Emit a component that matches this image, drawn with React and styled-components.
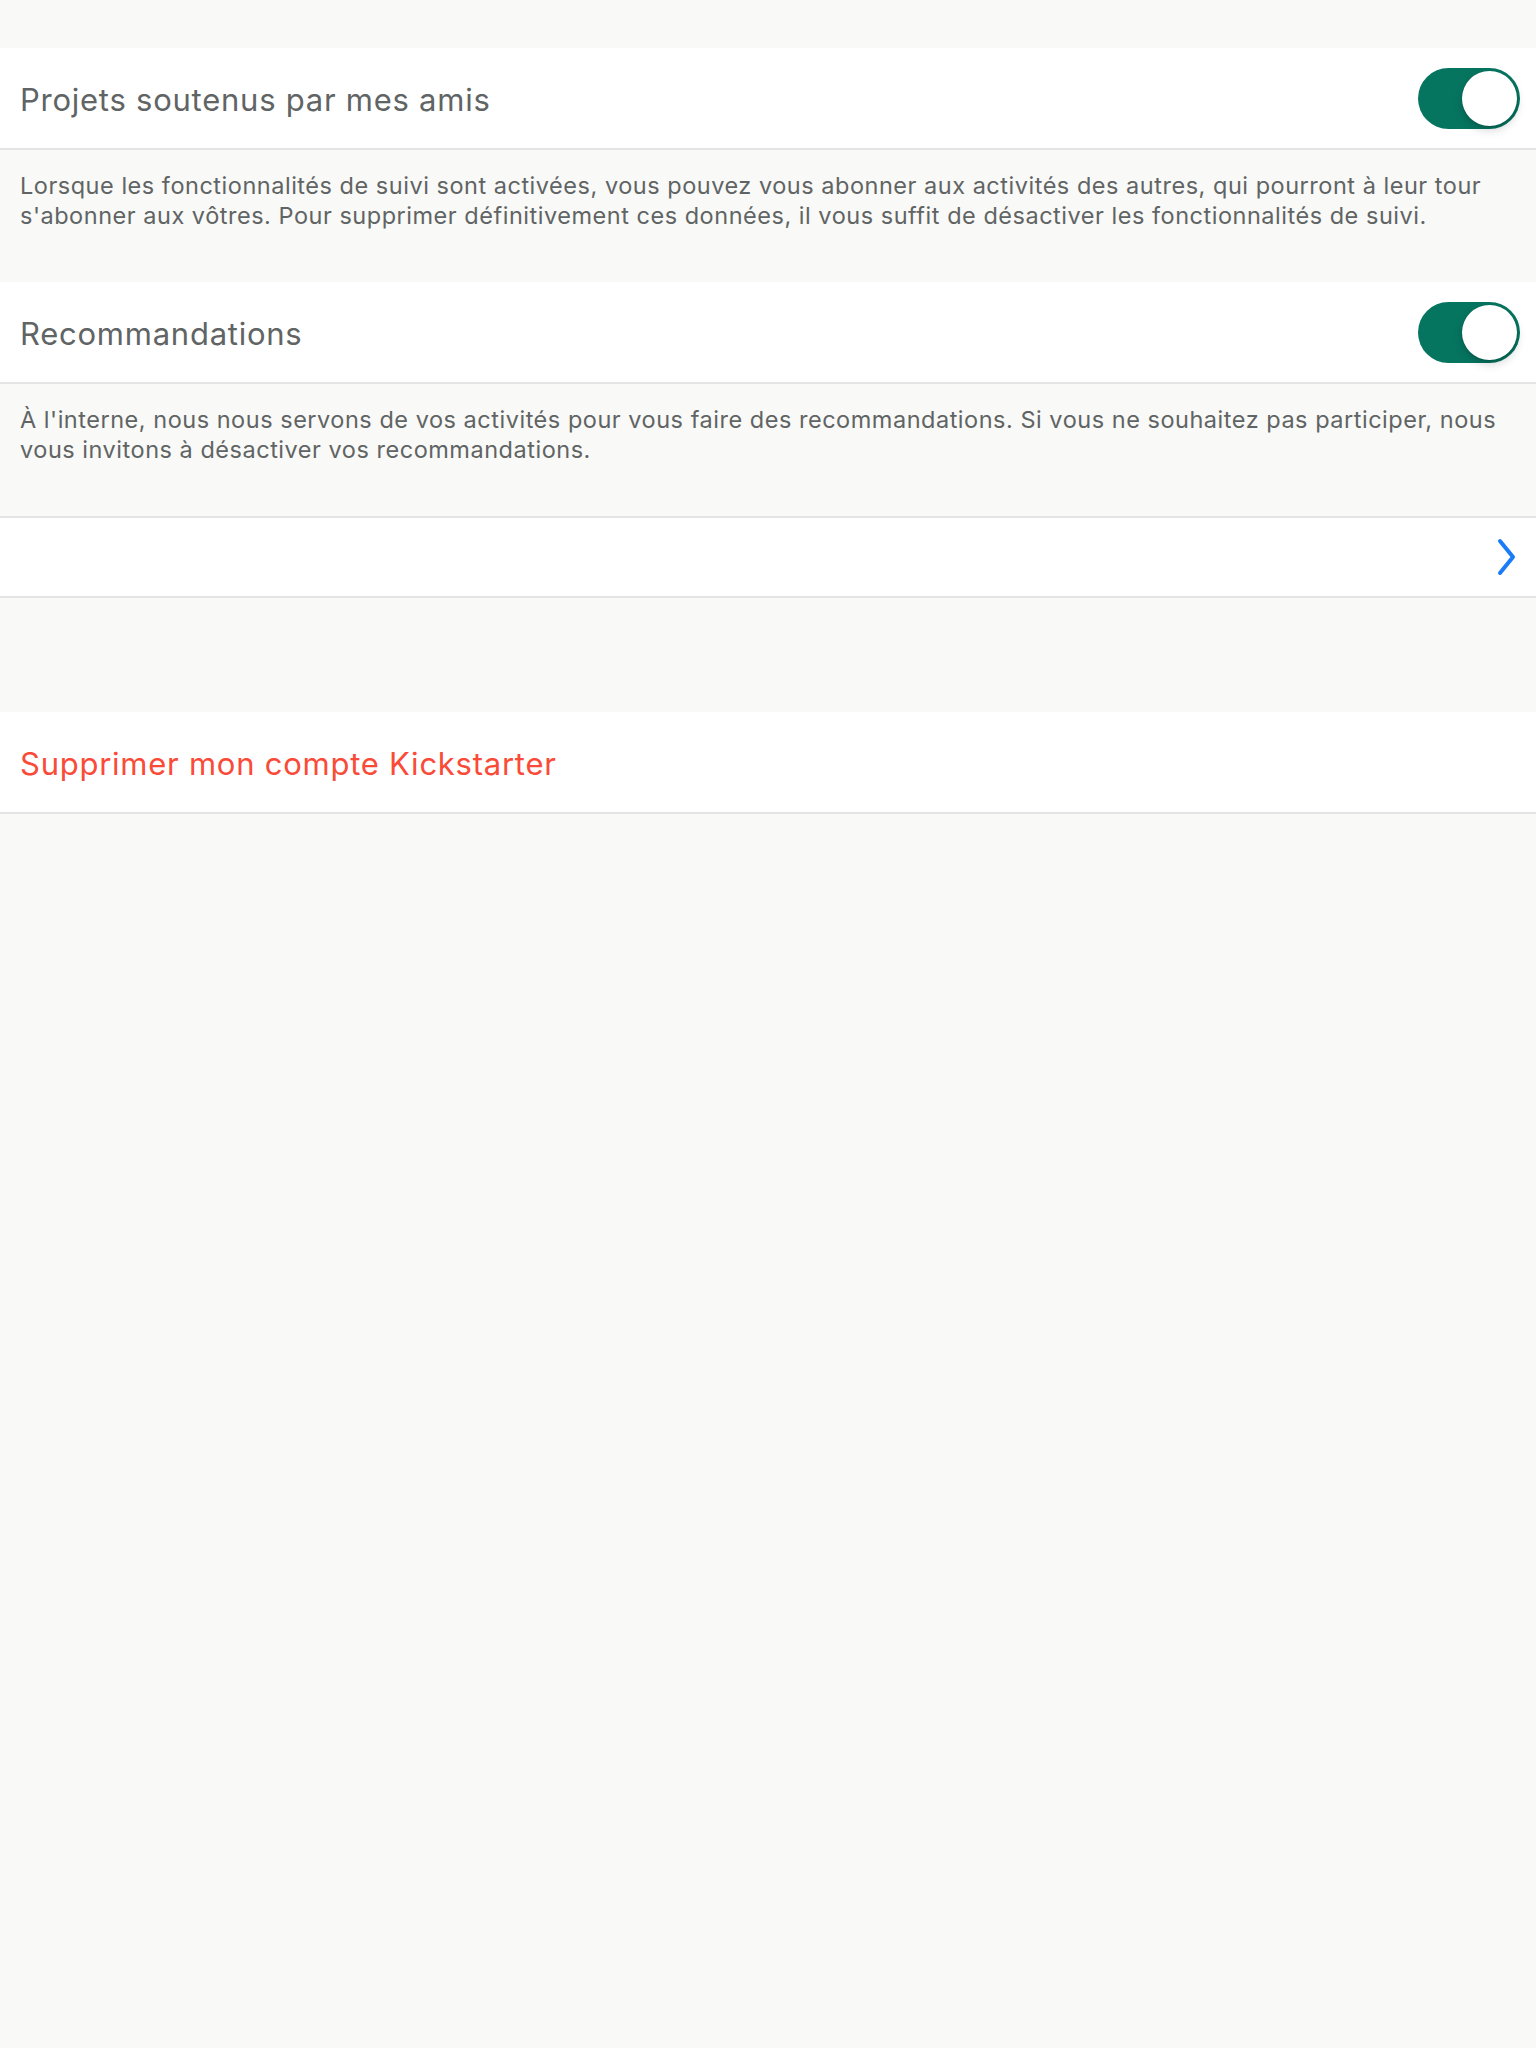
import React from 'react';
import styled, { createGlobalStyle } from 'styled-components';

const colors = {
  page: '#f9f9f7',
  white: '#ffffff',
  text: '#606464',
  line: '#e4e4e4',
  green: '#067560',
  red: '#fa4a38',
  blue: '#1a7cf8',
};

const GlobalStyle = createGlobalStyle`
  html, body {
    margin: 0;
    padding: 0;
    background: ${colors.page};
  }

  body {
    font-family: Inter, "Liberation Sans", Arial, sans-serif;
    color: ${colors.text};
  }
`;

const Page = styled.div`
  min-height: 2048px;
  padding-top: 48px;
  background: ${colors.page};
`;

const Group = styled.section`
  display: flex;
  flex-direction: column;
  margin-bottom: ${({ $gap }) => $gap || 0}px;
`;

const Row = styled.div`
  display: flex;
  align-items: center;
  justify-content: space-between;
  height: ${({ $height }) => $height || 100}px;
  padding: 0 19px 0 20px;
  background: ${colors.white};
  border-bottom: 2px solid ${colors.line};
  border-top: ${({ $topLine }) => ($topLine ? `2px solid ${colors.line}` : 'none')};
`;

const Label = styled.span`
  font-size: 31px;
  letter-spacing: 0.75px;
  padding-top: 2px;
  color: ${({ $danger }) => ($danger ? colors.red : colors.text)};
`;

const Note = styled.p`
  margin: 0;
  padding: 21px 20px 51px;
  font-size: 23.5px;
  line-height: 30px;
  letter-spacing: 0.52px;
  color: ${colors.text};
`;

const Switch = styled.span`
  position: relative;
  display: inline-block;
  width: 102px;
  height: 61px;
  margin-right: -3px;
  border-radius: 31px;
  background: ${colors.green};
  flex-shrink: 0;

  &::after {
    content: '';
    position: absolute;
    top: 3px;
    right: 3px;
    width: 55px;
    height: 55px;
    border-radius: 50%;
    background: ${colors.white};
    box-shadow: 0 4px 10px rgba(0, 0, 0, 0.18), 0 1px 2px rgba(0, 0, 0, 0.15);
  }
`;

const Chevron = () => (
  <svg width="20" height="40" viewBox="0 0 20 40">
    <path
      d="M3 4 L16 20 L3 36"
      fill="none"
      stroke={colors.blue}
      strokeWidth="4"
      strokeLinecap="round"
      strokeLinejoin="round"
    />
  </svg>
);

const App = () => (
  <Page>
    <GlobalStyle />
    <Group>
      <Row>
        <Label>Projets soutenus par mes amis</Label>
        <Switch />
      </Row>
      <Note>
        Lorsque les fonctionnalités de suivi sont activées, vous pouvez vous abonner aux activités des autres, qui
        pourront à leur tour s'abonner aux vôtres. Pour supprimer définitivement ces données, il vous suffit de
        désactiver les fonctionnalités de suivi.
      </Note>
    </Group>
    <Group>
      <Row>
        <Label>Recommandations</Label>
        <Switch />
      </Row>
      <Note>
        À l'interne, nous nous servons de vos activités pour vous faire des recommandations. Si vous ne souhaitez pas
        participer, nous vous invitons à désactiver vos recommandations.
      </Note>
    </Group>
    <Group $gap={114}>
      <Row $height={78} $topLine>
        <span />
        <Chevron />
      </Row>
    </Group>
    <Group>
      <Row>
        <Label $danger>Supprimer mon compte Kickstarter</Label>
      </Row>
    </Group>
  </Page>
);

export default App;
